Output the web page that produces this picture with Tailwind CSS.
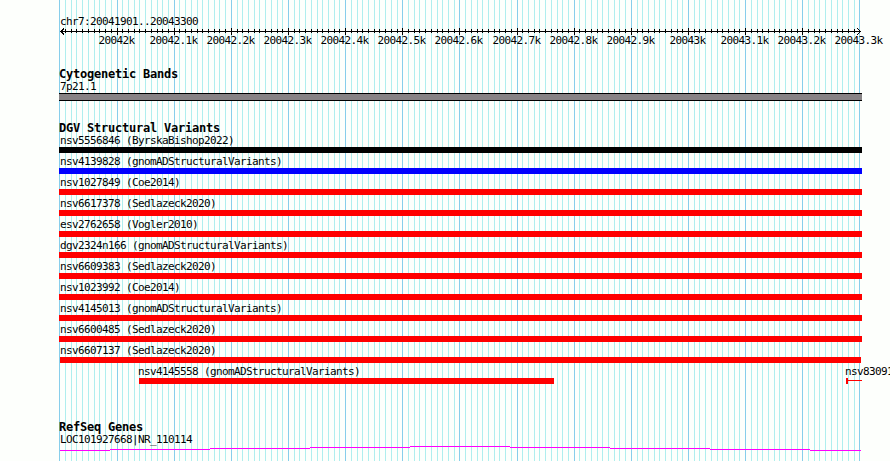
<!DOCTYPE html>
<html lang="en">
<head>
    <meta charset="UTF-8">
    <meta name="viewport" content="width=device-width, initial-scale=1.0">
    <title>chr7:20041901..20043300</title>
    <script src="https://cdn.jsdelivr.net/npm/@tailwindcss/browser@4"></script>
</head>
<body class="bg-[#fdfffc] text-black overflow-hidden">
    <div class="relative w-[890px] h-[461px] overflow-hidden pl-[59px] pt-4 font-['DejaVu_Sans_Mono',monospace] text-[11px] leading-[12px] tracking-[-0.622px] whitespace-nowrap">
        <!-- Grid lines -->
        <svg class="absolute inset-0" width="890" height="461" shape-rendering="crispEdges">
            <path id="minorGrid" fill="#afeeee" />
            <path id="majorGrid" fill="#87ceeb" />
        </svg>

        <div class="relative flex flex-col">
            <!-- Ruler -->
            <div class="pl-[1px]">chr7:20041901..20043300</div>
            <svg class="block" width="803" height="7" viewBox="59 28 803 7" shape-rendering="crispEdges" stroke="#000" fill="none">
                <path d="M60 31.5H861" />
                <path id="ticks" />
                <path d="M61 30.5h2M62 29.5h2M63 28.5h1M61 32.5h2M62 33.5h2M63 34.5h1" />
                <path d="M859 30.5h1M858 29.5h1M857 28.5h1M859 32.5h1M858 33.5h1M857 34.5h1" />
            </svg>
            <div id="tickLabels" class="relative h-3"></div>

            <!-- Cytogenetic Bands -->
            <section class="mt-[21px]">
                <h2 class="font-bold text-[12px] leading-[13px] tracking-[-0.225px]">Cytogenetic Bands</h2>
                <div class="pl-[1px]">7p21.1</div>
                <div class="w-[803px] h-2 bg-[#878385] border-y border-black"></div>
            </section>

            <!-- DGV Structural Variants -->
            <section class="mt-[21px]">
                <h2 class="font-bold text-[12px] leading-[13px] tracking-[-0.225px]">DGV Structural Variants</h2>
                <div id="variants" class="flex flex-col gap-[3px]"></div>
                <div class="flex mt-[3px] pl-20">
                    <div class="w-[707px]">
                        <div class="-ml-[1px]">nsv4145558 (gnomADStructuralVariants)</div>
                        <div class="w-[415px] h-1.5 bg-[#ff0000]"></div>
                    </div>
                    <div class="w-[44px]">
                        <div class="-ml-[1px]">nsv83091</div>
                        <svg class="block" width="16" height="6" shape-rendering="crispEdges" fill="#ff0000">
                            <rect width="2" height="6" />
                            <rect y="2" width="16" height="1" />
                        </svg>
                    </div>
                </div>
            </section>

            <!-- RefSeq Genes -->
            <section class="mt-[37px]">
                <h2 class="font-bold text-[12px] leading-[13px] tracking-[-0.225px]">RefSeq Genes</h2>
                <div class="pl-[1px]">LOC101927668|NR_110114</div>
                <svg class="block" width="803" height="5" viewBox="59 446 803 5" shape-rendering="crispEdges" stroke="#ff00ff" fill="none">
                    <path d="M60 450.5H110M110 449.5H210M210 448.5H310M310 447.5H410M410 446.5H510M510 447.5H610M610 448.5H710M710 449.5H810M810 450.5H861" />
                </svg>
            </section>
        </div>
    </div>

    <script>
        const variants = [
            ['nsv5556846 (ByrskaBishop2022)', 'w-[803px] bg-black'],
            ['nsv4139828 (gnomADStructuralVariants)', 'w-[803px] bg-[#0000ff]'],
            ['nsv1027849 (Coe2014)', 'w-[803px] bg-[#ff0000]'],
            ['nsv6617378 (Sedlazeck2020)', 'w-[803px] bg-[#ff0000]'],
            ['esv2762658 (Vogler2010)', 'w-[803px] bg-[#ff0000]'],
            ['dgv2324n166 (gnomADStructuralVariants)', 'w-[803px] bg-[#ff0000]'],
            ['nsv6609383 (Sedlazeck2020)', 'w-[803px] bg-[#ff0000]'],
            ['nsv1023992 (Coe2014)', 'w-[803px] bg-[#ff0000]'],
            ['nsv4145013 (gnomADStructuralVariants)', 'w-[803px] bg-[#ff0000]'],
            ['nsv6600485 (Sedlazeck2020)', 'w-[803px] bg-[#ff0000]'],
            ['nsv6607137 (Sedlazeck2020)', 'ml-[1px] w-[801px] bg-[#ff0000]']
        ];
        document.getElementById('variants').innerHTML = variants.map(([name, bar]) => `
            <div>
                <div class="pl-[1px]">${name}</div>
                <div class="h-1.5 ${bar}"></div>
            </div>`).join('');

        // One line every 10 bp, a major one every 100 bp
        let minor = '', major = '', ticks = '', labels = '';
        for (let i = 0; i <= 140; i++) {
            const x = i === 3 ? 76 : Math.floor(59.8572 + i * 40 / 7);
            if (i % 10 === 0) {
                major += `M${x} 0h1v461h-1z`;
                if (i > 0) {
                    if (i < 140) ticks += `M${x + 0.5} 28V35`;
                    const label = (20041900 + i * 10) / 1000 + 'k';
                    labels += `<span class="absolute top-0" style="left:${x - 59 - label.length * 3 - 0.5}px">${label}</span>`;
                }
            } else {
                minor += `M${x} 0h1v461h-1z`;
                ticks += `M${x + 0.5} 29V33`;
            }
        }
        document.getElementById('minorGrid').setAttribute('d', minor);
        document.getElementById('majorGrid').setAttribute('d', major);
        document.getElementById('ticks').setAttribute('d', ticks);
        document.getElementById('tickLabels').innerHTML = labels;
    </script>
</body>
</html>
